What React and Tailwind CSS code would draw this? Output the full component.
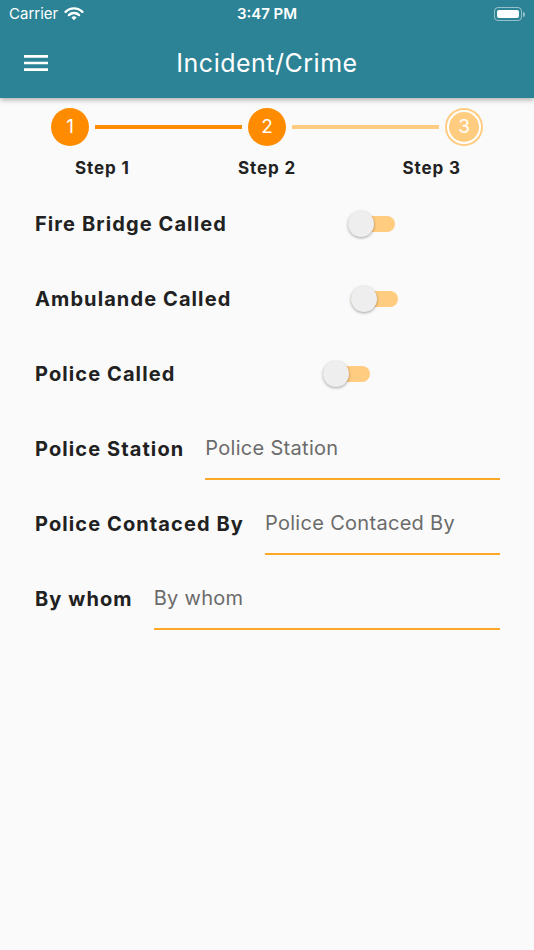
import React from "react";

function Wifi() {
  return (
    <svg width="20" height="14" viewBox="0 0 20 14" className="ml-[6px]">
      <path d="M10 13.2 L7.4 10.6 A3.7 3.7 0 0 1 12.6 10.6 Z" fill="white" />
      <path d="M4.9 8.1 A7.3 7.3 0 0 1 15.1 8.1" stroke="white" strokeWidth="2.4" fill="none" strokeLinecap="round" />
      <path d="M1.6 4.8 A11.9 11.9 0 0 1 18.4 4.8" stroke="white" strokeWidth="2.4" fill="none" strokeLinecap="round" />
    </svg>
  );
}

function Battery() {
  return (
    <div className="flex items-center">
      <div className="w-[28px] h-[14px] rounded-[4px] border border-white/50 p-[2px]">
        <div className="w-full h-full rounded-[2px] bg-white" />
      </div>
      <div className="w-[2px] h-[5px] rounded-r-sm bg-white/50 ml-[1px]" />
    </div>
  );
}

function Menu() {
  return (
    <svg width="32" height="32" viewBox="0 0 24 24" fill="white">
      <path d="M3 18h18v-2H3v2zm0-5h18v-2H3v2zm0-7v2h18V6H3z" />
    </svg>
  );
}

function Switch() {
  return (
    <div className="relative w-[47px] h-[16px] rounded-full bg-[#FFCC80]">
      <div className="absolute left-0 top-1/2 -translate-y-1/2 w-[26px] h-[26px] rounded-full bg-[#eeeeee] shadow-[0_1px_3px_rgba(0,0,0,0.35)]" />
    </div>
  );
}

function ToggleRow({ label }) {
  return (
    <div className="h-[75px] flex items-center pl-[35px] pr-[17px]">
      <span className="text-[20px] font-bold text-[#212121] leading-[24px] tracking-[1.1px]">{label}</span>
      <div className="flex-1 flex justify-center">
        <Switch />
      </div>
    </div>
  );
}

function InputRow({ label }) {
  return (
    <div className="h-[75px] flex items-center pl-[35px] pr-[34px]">
      <span className="text-[20px] font-bold text-[#212121] leading-[24px] tracking-[1.1px] whitespace-nowrap">{label}</span>
      <div className="ml-[21px] flex-1 self-end mb-[6px] h-[62px] border-b-2 border-[#FFA726] flex items-center text-[20px] text-[#6b6b6b] leading-[24px] tracking-[0.3px] whitespace-nowrap">
        {label}
      </div>
    </div>
  );
}

export default function App() {
  return (
    <div className="min-h-[950px] bg-[#fafafa] font-['Inter',sans-serif]">
      <div className="relative z-10 h-[98px] bg-[#2c8395] shadow-[0_2px_5px_rgba(0,0,0,0.3)]">
        <div className="h-[28px] grid grid-cols-3 items-center px-[9px] text-white text-[15px]">
          <div className="flex items-center">
            <span>Carrier</span>
            <Wifi />
          </div>
          <div className="text-center font-semibold">3:47 PM</div>
          <div className="flex justify-end">
            <Battery />
          </div>
        </div>
        <div className="h-[70px] grid grid-cols-[52px_1fr_52px] items-center">
          <div className="pl-[20px] flex items-center">
            <Menu />
          </div>
          <div className="text-center text-white text-[25px] leading-[30px] tracking-[0.5px]">Incident/Crime</div>
          <div />
        </div>
      </div>

      <div className="pt-[10px]">
        <div className="flex items-center px-[51px]">
          <div className="w-[38px] h-[38px] rounded-full bg-[#ff8c00] flex items-center justify-center text-white text-[19px]">1</div>
          <div className="flex-1 mx-[6px] h-[4px] bg-[#ff8c00]" />
          <div className="w-[38px] h-[38px] rounded-full bg-[#ff8c00] flex items-center justify-center text-white text-[19px]">2</div>
          <div className="flex-1 mx-[6px] h-[4px] bg-[#FFCC80]" />
          <div className="w-[38px] h-[38px] rounded-full bg-[#FFCC80] p-[2px]">
            <div className="w-full h-full rounded-full border-2 border-white bg-[#FFCC80] flex items-center justify-center text-white text-[19px]">3</div>
          </div>
        </div>
        <div className="mt-[12px] grid grid-cols-3 px-[20px] text-center text-[17px] font-bold leading-[20px] tracking-[0.9px] text-[#212121]">
          <div>Step 1</div>
          <div>Step 2</div>
          <div>Step 3</div>
        </div>
      </div>

      <div className="mt-[8px]">
        <ToggleRow label="Fire Bridge Called" />
        <ToggleRow label="Ambulande Called" />
        <ToggleRow label="Police Called" />
        <InputRow label="Police Station" />
        <InputRow label="Police Contaced By" />
        <InputRow label="By whom" />
      </div>
    </div>
  );
}
